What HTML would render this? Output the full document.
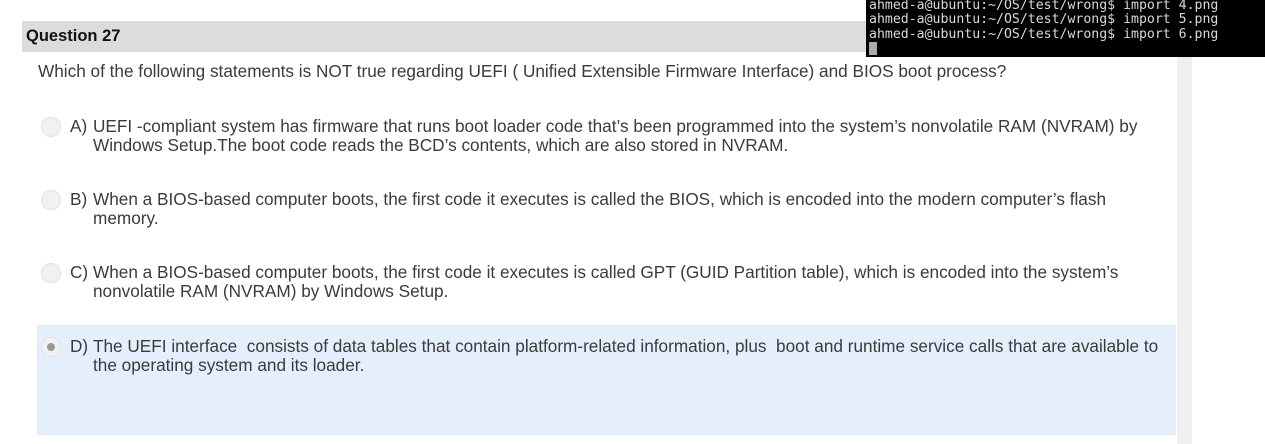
<!DOCTYPE html>
<html><head><style>
body{margin:0;width:1265px;height:444px;background:#fff;position:relative;overflow:hidden;font-family:"Liberation Sans",sans-serif;color:#3b3b3b}
.hdr{position:absolute;left:22px;top:21px;width:1155px;height:31px;background:#dcdcdc}
.hdr span{position:absolute;left:4px;top:6px;font-weight:bold;font-size:16.5px;color:#111}
.strip{position:absolute;left:1177px;top:52px;width:15px;height:392px;background:#efefef}
.q{position:absolute;left:38px;top:61px;font-size:17.2px;white-space:nowrap}
.opt{position:absolute;left:70px;font-size:17.2px;line-height:19px;width:1100px;white-space:nowrap}
.opt .t{position:absolute;left:23px;top:0}
.rad{position:absolute;left:41px;width:20px;height:20px;border-radius:50%;background:#f1f1f3;border:1px solid #e2e2e6;box-sizing:border-box}
.hl{position:absolute;left:37px;top:325px;width:1139px;height:110px;background:#e5eefb}
.term{position:absolute;left:866px;top:0;width:399px;height:57px;background:#000;overflow:hidden}
.term pre{margin:0;position:absolute;left:3px;top:-1px;color:#d9d9d9;font-family:"DejaVu Sans Mono",monospace;font-size:13.2px;line-height:14.3px}
.cur{display:inline-block;width:8px;height:13px;background:#aaa;vertical-align:-2px}
</style></head><body>
<div class="hdr"><span>Question 27</span></div>
<div class="strip"></div>
<div class="q">Which of the following statements is NOT true regarding UEFI ( Unified Extensible Firmware Interface) and BIOS boot process?</div>
<div class="rad" style="top:117px"></div>
<div class="opt" style="top:117px">A)<div class="t">UEFI -compliant system has firmware that runs boot loader code that’s been programmed into the system’s nonvolatile RAM (NVRAM) by<br>Windows Setup.The boot code reads the BCD’s contents, which are also stored in NVRAM.</div></div>
<div class="rad" style="top:190px"></div>
<div class="opt" style="top:190px">B)<div class="t">When a BIOS-based computer boots, the first code it executes is called the BIOS, which is encoded into the modern computer’s flash<br>memory.</div></div>
<div class="rad" style="top:263px"></div>
<div class="opt" style="top:263px">C)<div class="t">When a BIOS-based computer boots, the first code it executes is called GPT (GUID Partition table), which is encoded into the system’s<br>nonvolatile RAM (NVRAM) by Windows Setup.</div></div>
<div class="hl"></div>
<div class="rad" style="top:337px"><div style="position:absolute;left:5px;top:5px;width:8px;height:8px;border-radius:50%;background:#999"></div></div>
<div class="opt" style="top:337px">D)<div class="t">The UEFI interface&nbsp; consists of data tables that contain platform-related information, plus&nbsp; boot and runtime service calls that are available to<br>the operating system and its loader.</div></div>
<div class="term"><pre>ahmed-a@ubuntu:~/OS/test/wrong$ import 4.png
ahmed-a@ubuntu:~/OS/test/wrong$ import 5.png
ahmed-a@ubuntu:~/OS/test/wrong$ import 6.png
<span class="cur"></span></pre></div>
</body></html>
